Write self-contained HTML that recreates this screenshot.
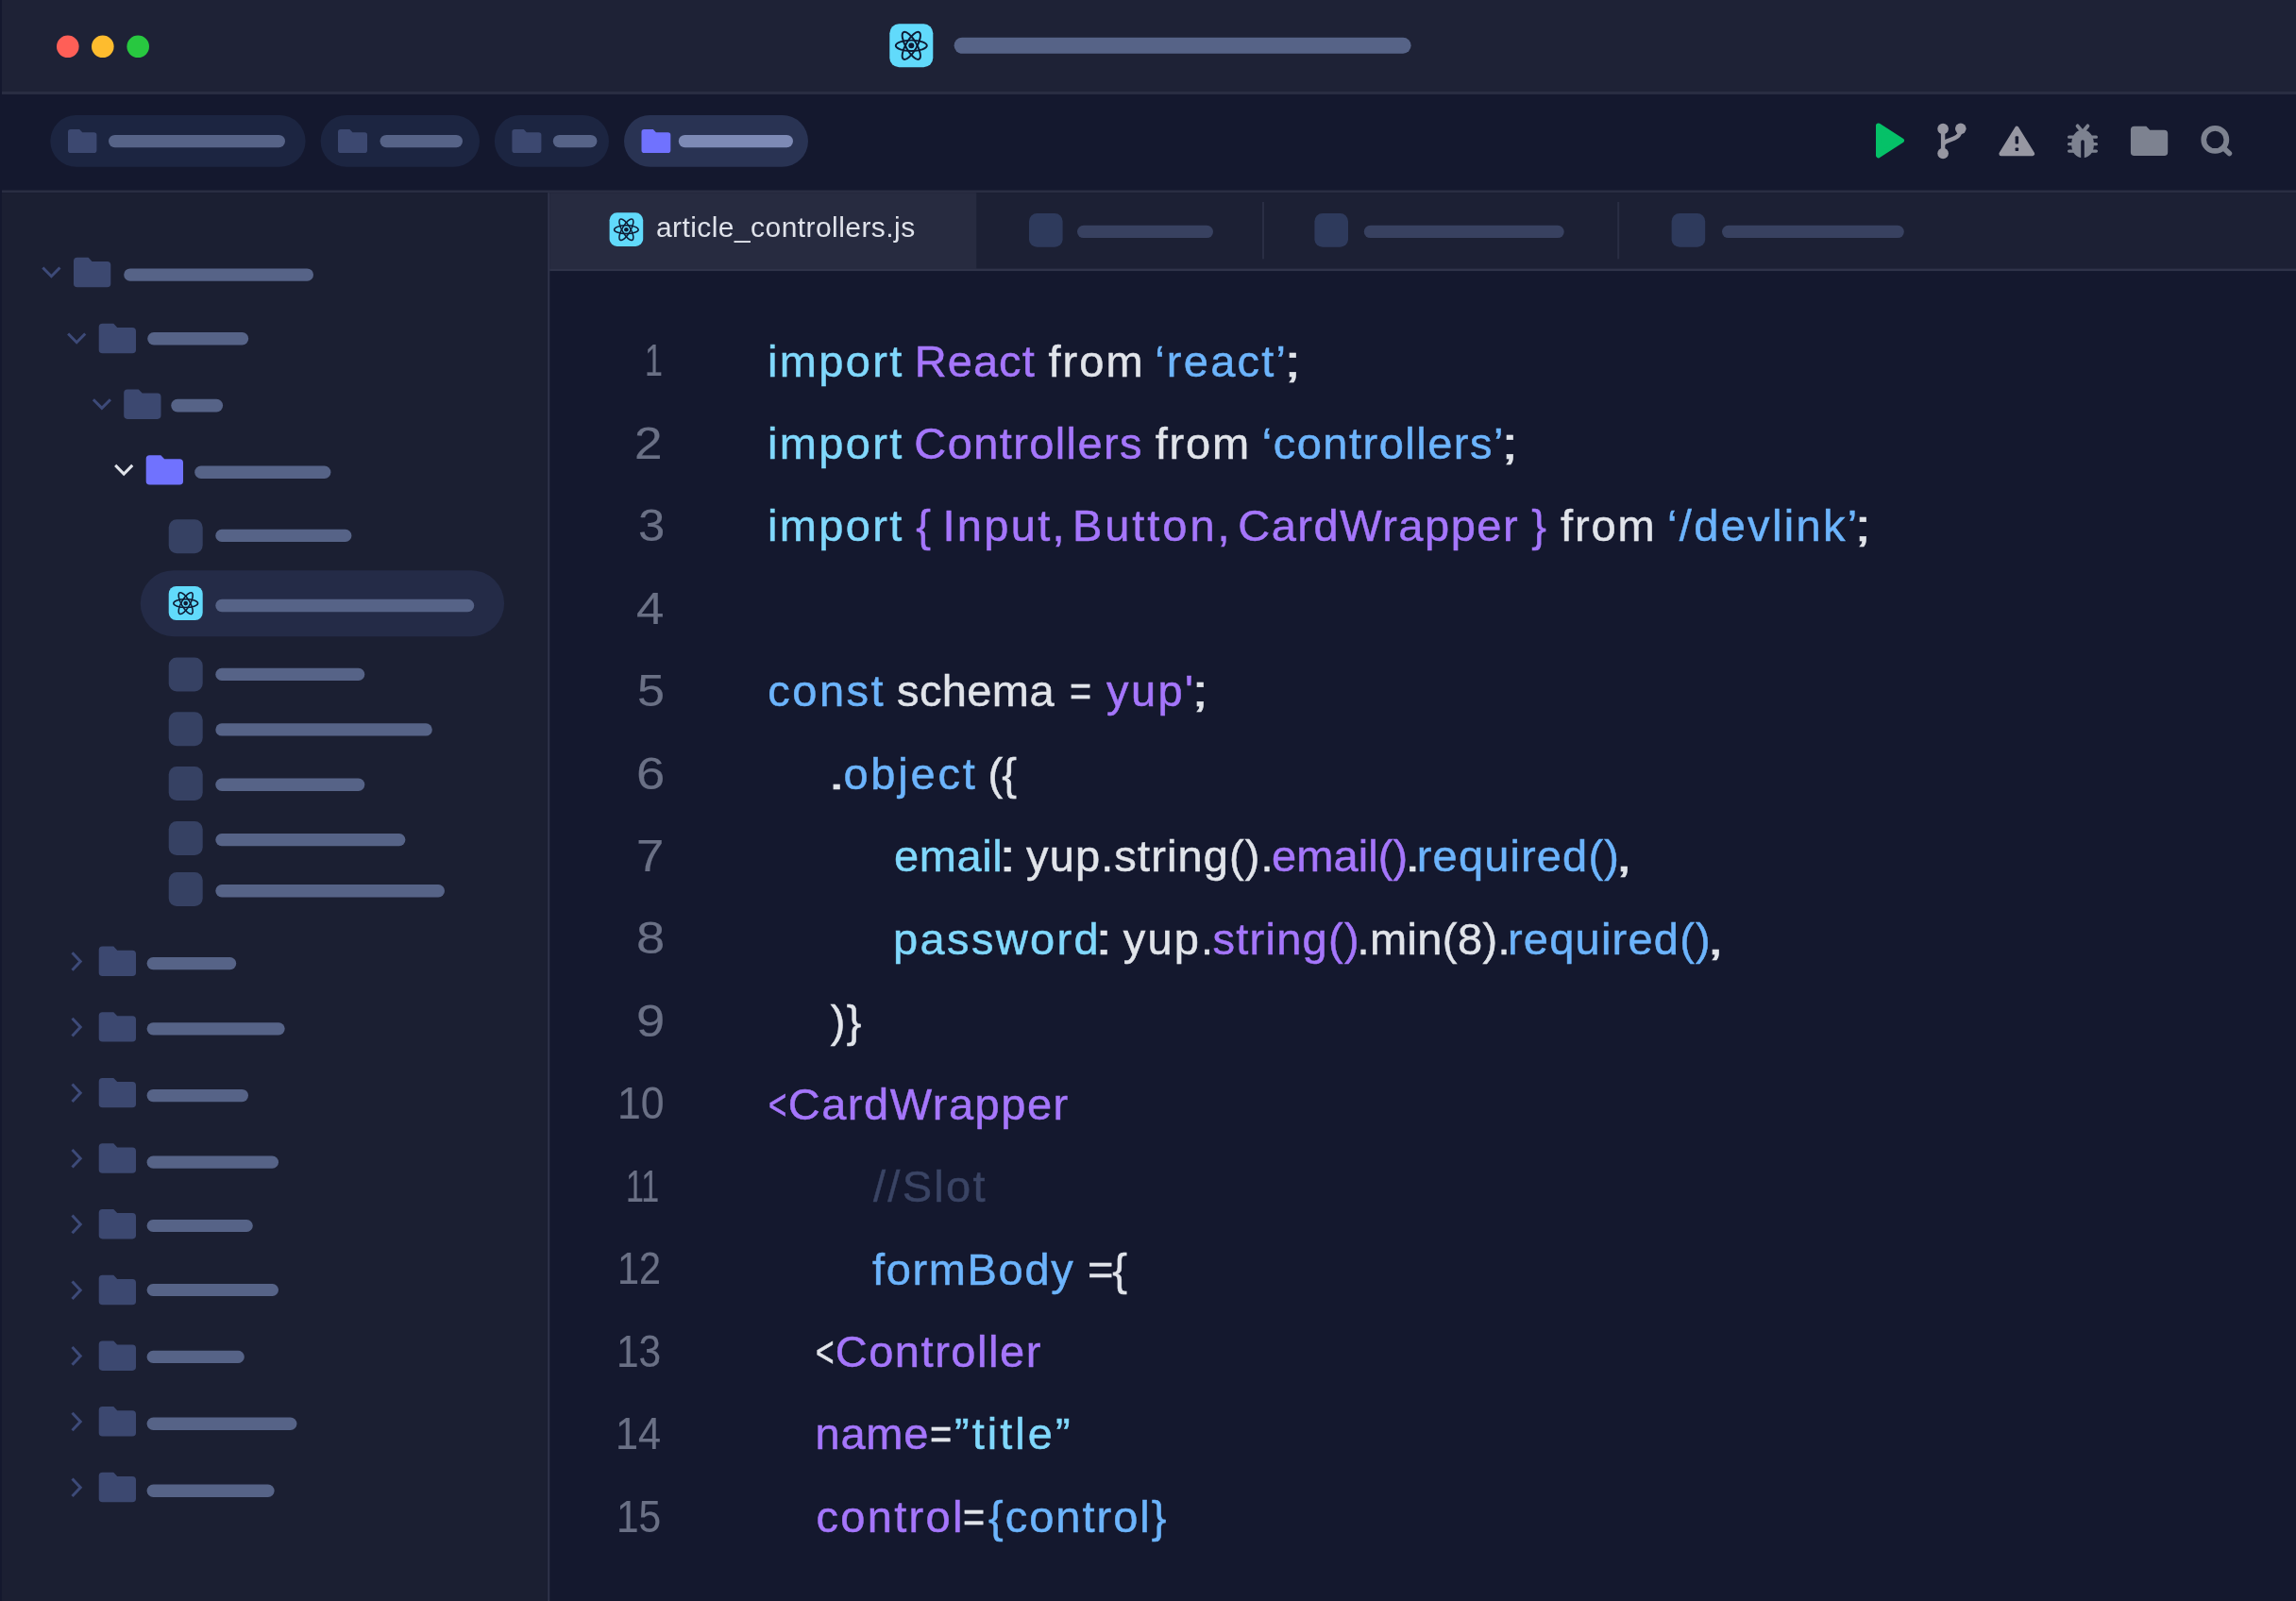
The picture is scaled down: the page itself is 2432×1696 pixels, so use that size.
<!DOCTYPE html>
<html lang="en">
<head>
<meta charset="utf-8">
<title>article_controllers.js</title>
<style>
html,body{margin:0;padding:0;background:#14182e;}
body{width:2432px;height:1696px;position:relative;overflow:hidden;font-family:"Liberation Sans",sans-serif;}
svg{position:absolute;left:0;top:0;display:block;}
#t{position:absolute;left:0;top:0;width:2432px;height:1696px;will-change:transform;}
#t span{position:absolute;white-space:pre;-webkit-text-stroke:0.5px;font-size:47.0px;line-height:47.0px;font-family:"Liberation Sans",sans-serif;}
</style>
</head>
<body>
<svg width="2432" height="1696" viewBox="0 0 2432 1696">
<rect x="2" y="0" width="2430" height="97" fill="#1e2236"/>
<rect x="2" y="97" width="2430" height="3" fill="#292d42"/>
<rect x="2" y="201.5" width="2430" height="2.7" fill="#292d42"/>
<rect x="2" y="204.2" width="578" height="1491.8" fill="#1b1f32"/>
<rect x="580.2" y="204.2" width="2" height="1491.8" fill="#30344a"/>
<rect x="582.2" y="204.2" width="1849.8" height="80.4" fill="#1c2034"/>
<rect x="582.2" y="204.2" width="452.1" height="80.4" fill="#272b40"/>
<rect x="582.2" y="284.5" width="1849.8" height="2.6" fill="#2f3349"/>
<circle cx="71.8" cy="49.3" r="11.8" fill="#ff5f57"/>
<circle cx="108.8" cy="49.3" r="11.8" fill="#febc2e"/>
<circle cx="146.2" cy="49.3" r="11.8" fill="#28c840"/>
<rect x="942.30" y="25.20" width="46.00" height="46.00" rx="10.00" fill="#61dafb"/><ellipse cx="965.30" cy="48.34" rx="16.50" ry="5.70" fill="none" stroke="#0e1a33" stroke-width="1.95" transform="rotate(0 965.30 48.34)"/><ellipse cx="965.30" cy="48.34" rx="16.50" ry="5.70" fill="none" stroke="#0e1a33" stroke-width="1.95" transform="rotate(60 965.30 48.34)"/><ellipse cx="965.30" cy="48.34" rx="16.50" ry="5.70" fill="none" stroke="#0e1a33" stroke-width="1.95" transform="rotate(120 965.30 48.34)"/><circle cx="965.30" cy="48.34" r="3.00" fill="#0e1a33"/>
<rect x="1010.6" y="39.8" width="484.0" height="16.9" rx="8.5" fill="#566387"/>
<rect x="53.3" y="122" width="270.3" height="54.8" rx="27.4" fill="#1c2541"/>
<path d="M74.80 137.00 H84.16 L87.25 140.25 H99.60 Q102.40 140.25 102.40 143.05 V159.20 Q102.40 162.00 99.60 162.00 H74.80 Q72.00 162.00 72.00 159.20 V139.80 Q72.00 137.00 74.80 137.00Z" fill="#3c4870"/>
<rect x="115.0" y="142.9" width="187.0" height="13.4" rx="6.7" fill="#566387"/>
<rect x="339.6" y="122" width="168.4" height="54.8" rx="27.4" fill="#1c2541"/>
<path d="M360.80 137.00 H370.40 L373.49 140.25 H386.20 Q389.00 140.25 389.00 143.05 V159.20 Q389.00 162.00 386.20 162.00 H360.80 Q358.00 162.00 358.00 159.20 V139.80 Q358.00 137.00 360.80 137.00Z" fill="#3c4870"/>
<rect x="402.5" y="142.9" width="87.5" height="13.4" rx="6.7" fill="#566387"/>
<rect x="523.8" y="122" width="121.2" height="54.8" rx="27.4" fill="#1c2541"/>
<path d="M545.20 137.00 H554.80 L557.89 140.25 H570.60 Q573.40 140.25 573.40 143.05 V159.20 Q573.40 162.00 570.60 162.00 H545.20 Q542.40 162.00 542.40 159.20 V139.80 Q542.40 137.00 545.20 137.00Z" fill="#3c4870"/>
<rect x="585.8" y="142.9" width="46.6" height="13.4" rx="6.7" fill="#566387"/>
<rect x="661.0" y="122" width="195.0" height="54.8" rx="27.4" fill="#293353"/>
<path d="M682.30 137.00 H691.82 L694.91 140.25 H707.50 Q710.30 140.25 710.30 143.05 V159.20 Q710.30 162.00 707.50 162.00 H682.30 Q679.50 162.00 679.50 159.20 V139.80 Q679.50 137.00 682.30 137.00Z" fill="#7072fe"/>
<rect x="718.8" y="142.9" width="121.2" height="13.4" rx="6.7" fill="#7d8ab5"/>
<path d="M1989.6 133.0 L2014.4 148.85 L1989.6 164.7 Z" fill="#05c168" stroke="#05c168" stroke-width="5.2" stroke-linejoin="round"/>
<g fill="#9797a2"><circle cx="2058.1" cy="136.5" r="5.8"/><circle cx="2076.8" cy="136.3" r="5.8"/><circle cx="2058.1" cy="162.5" r="5.8"/></g>
<path d="M2058.1 136.5 V162.5 M2058.1 154 C2058.1 146.5 2076.8 150.5 2076.8 136.5" fill="none" stroke="#9797a2" stroke-width="4.4"/>
<path d="M2136.3 135.8 L2153 163 H2119.6 Z" fill="#9797a2" stroke="#9797a2" stroke-width="4.4" stroke-linejoin="round"/>
<rect x="2134.6" y="144.2" width="3.5" height="8.4" rx="1" fill="#14182e"/><rect x="2134.6" y="156.6" width="3.5" height="3.3" rx="0.6" fill="#14182e"/>
<path d="M2201.5 138.6 Q2206 136.9 2210.5 138.6 C2215 141 2217.9 146 2217.9 153 C2217.9 162 2212.5 167.2 2206 167.2 C2199.5 167.2 2194.2 162 2194.2 153 C2194.2 146 2197 141 2201.5 138.6Z" fill="#7d8290"/>
<path d="M2200.6 133.4 L2204.4 138 M2211.4 133.4 L2207.6 138" stroke="#7d8290" stroke-width="3.9" stroke-linecap="round" fill="none"/>
<path d="M2191.6 145.2 H2197 M2191.6 152.7 H2197 M2191.6 160.1 H2197 M2215 145.2 H2220.4 M2215 152.7 H2220.4 M2215 160.1 H2220.4" stroke="#7d8290" stroke-width="3.3" stroke-linecap="round" fill="none"/>
<path d="M2204.2 168 V150 Q2204.2 148.2 2206 148.2 Q2207.8 148.2 2207.8 150 V168Z" fill="#14182e"/>
<path d="M2260.70 133.70 H2273.40 L2277.20 137.70 H2292.40 Q2296.20 137.70 2296.20 141.50 V161.30 Q2296.20 165.10 2292.40 165.10 H2260.70 Q2256.90 165.10 2256.90 161.30 V137.50 Q2256.90 133.70 2260.70 133.70Z" fill="#7d8290"/>
<circle cx="2346.3" cy="147.9" r="12.05" fill="none" stroke="#7d8290" stroke-width="5.7"/>
<path d="M2355.6 157 L2361.4 162.6" stroke="#7d8290" stroke-width="5.6" stroke-linecap="round"/>
<rect x="645.60" y="225.30" width="35.60" height="35.60" rx="8.00" fill="#61dafb"/><ellipse cx="663.40" cy="243.21" rx="12.77" ry="4.41" fill="none" stroke="#0e1a33" stroke-width="1.51" transform="rotate(0 663.40 243.21)"/><ellipse cx="663.40" cy="243.21" rx="12.77" ry="4.41" fill="none" stroke="#0e1a33" stroke-width="1.51" transform="rotate(60 663.40 243.21)"/><ellipse cx="663.40" cy="243.21" rx="12.77" ry="4.41" fill="none" stroke="#0e1a33" stroke-width="1.51" transform="rotate(120 663.40 243.21)"/><circle cx="663.40" cy="243.21" r="2.32" fill="#0e1a33"/>
<rect x="1090.0" y="226.0" width="35.6" height="35.8" rx="8.5" fill="#2e3a5c"/>
<rect x="1141.0" y="238.7" width="144.0" height="13.4" rx="6.7" fill="#384160"/>
<rect x="1392.4" y="226.0" width="35.6" height="35.8" rx="8.5" fill="#2e3a5c"/>
<rect x="1444.8" y="238.7" width="211.9" height="13.4" rx="6.7" fill="#384160"/>
<rect x="1770.6" y="226.0" width="35.6" height="35.8" rx="8.5" fill="#2e3a5c"/>
<rect x="1824.0" y="238.7" width="192.8" height="13.4" rx="6.7" fill="#384160"/>
<rect x="1337.0" y="214" width="2" height="60.4" fill="#2a2e44"/>
<rect x="1713.2" y="214" width="2" height="60.4" fill="#2a2e44"/>
<path d="M45.35 283.50 L54.40 292.70 L63.45 283.50" fill="none" stroke="#3d4a78" stroke-width="3.0" stroke-linecap="butt" stroke-linejoin="miter"/>
<path d="M81.80 272.80 H93.60 L97.49 276.90 H113.50 Q117.30 276.90 117.30 280.70 V300.40 Q117.30 304.20 113.50 304.20 H81.80 Q78.00 304.20 78.00 300.40 V276.60 Q78.00 272.80 81.80 272.80Z" fill="#3c4870"/>
<rect x="131.2" y="284.4" width="200.8" height="13.4" rx="6.7" fill="#566387"/>
<path d="M72.15 353.50 L81.20 362.70 L90.25 353.50" fill="none" stroke="#3d4a78" stroke-width="3.0" stroke-linecap="butt" stroke-linejoin="miter"/>
<path d="M108.50 342.80 H120.30 L124.19 346.90 H140.20 Q144.00 346.90 144.00 350.70 V370.40 Q144.00 374.20 140.20 374.20 H108.50 Q104.70 374.20 104.70 370.40 V346.60 Q104.70 342.80 108.50 342.80Z" fill="#3c4870"/>
<rect x="156.2" y="352.1" width="107.0" height="13.4" rx="6.7" fill="#566387"/>
<path d="M98.85 423.20 L107.90 432.40 L116.95 423.20" fill="none" stroke="#3d4a78" stroke-width="3.0" stroke-linecap="butt" stroke-linejoin="miter"/>
<path d="M135.00 412.50 H146.80 L150.69 416.60 H166.70 Q170.50 416.60 170.50 420.40 V440.10 Q170.50 443.90 166.70 443.90 H135.00 Q131.20 443.90 131.20 440.10 V416.30 Q131.20 412.50 135.00 412.50Z" fill="#3c4870"/>
<rect x="181.2" y="422.7" width="54.9" height="13.7" rx="6.8" fill="#566387"/>
<path d="M122.15 492.90 L131.20 502.10 L140.25 492.90" fill="none" stroke="#e1e4ea" stroke-width="3.0" stroke-linecap="butt" stroke-linejoin="miter"/>
<path d="M158.50 482.20 H170.30 L174.19 486.30 H190.20 Q194.00 486.30 194.00 490.10 V509.80 Q194.00 513.60 190.20 513.60 H158.50 Q154.70 513.60 154.70 509.80 V486.00 Q154.70 482.20 158.50 482.20Z" fill="#7072fe"/>
<rect x="206.2" y="493.6" width="144.2" height="13.4" rx="6.7" fill="#566387"/>
<rect x="148.7" y="604.2" width="385.4" height="70" rx="35" fill="#242b47"/>
<rect x="178.7" y="550.2" width="36" height="36" rx="8.5" fill="#364163"/>
<rect x="228.3" y="560.8" width="144.1" height="13.2" rx="6.6" fill="#566387"/>
<rect x="178.70" y="621.00" width="36.00" height="36.00" rx="8.00" fill="#61dafb"/><ellipse cx="196.70" cy="639.11" rx="12.91" ry="4.46" fill="none" stroke="#0e1a33" stroke-width="1.53" transform="rotate(0 196.70 639.11)"/><ellipse cx="196.70" cy="639.11" rx="12.91" ry="4.46" fill="none" stroke="#0e1a33" stroke-width="1.53" transform="rotate(60 196.70 639.11)"/><ellipse cx="196.70" cy="639.11" rx="12.91" ry="4.46" fill="none" stroke="#0e1a33" stroke-width="1.53" transform="rotate(120 196.70 639.11)"/><circle cx="196.70" cy="639.11" r="2.35" fill="#0e1a33"/>
<rect x="228.3" y="634.8" width="273.9" height="13.4" rx="6.7" fill="#566387"/>
<rect x="178.7" y="696.6" width="36" height="36" rx="8.5" fill="#364163"/>
<rect x="228.3" y="707.8" width="158.0" height="13.2" rx="6.6" fill="#566387"/>
<rect x="178.7" y="754.3" width="36" height="36" rx="8.5" fill="#364163"/>
<rect x="228.3" y="766.2" width="229.5" height="13.4" rx="6.7" fill="#566387"/>
<rect x="178.7" y="812.1" width="36" height="36" rx="8.5" fill="#364163"/>
<rect x="228.3" y="824.6" width="158.0" height="13.4" rx="6.7" fill="#566387"/>
<rect x="178.7" y="869.9" width="36" height="36" rx="8.5" fill="#364163"/>
<rect x="228.3" y="883.0" width="201.1" height="13.2" rx="6.6" fill="#566387"/>
<rect x="178.7" y="924.0" width="36" height="36" rx="8.5" fill="#364163"/>
<rect x="228.3" y="937.0" width="242.7" height="13.4" rx="6.7" fill="#566387"/>
<path d="M76.50 1009.20 L85.20 1018.50 L76.50 1027.80" fill="none" stroke="#3d4a78" stroke-width="3.0" stroke-linecap="butt" stroke-linejoin="miter"/>
<path d="M108.50 1002.60 H120.30 L124.19 1006.70 H140.20 Q144.00 1006.70 144.00 1010.50 V1030.20 Q144.00 1034.00 140.20 1034.00 H108.50 Q104.70 1034.00 104.70 1030.20 V1006.40 Q104.70 1002.60 108.50 1002.60Z" fill="#3c4870"/>
<rect x="155.6" y="1014.0" width="94.6" height="13.2" rx="6.6" fill="#566387"/>
<path d="M76.50 1078.80 L85.20 1088.10 L76.50 1097.40" fill="none" stroke="#3d4a78" stroke-width="3.0" stroke-linecap="butt" stroke-linejoin="miter"/>
<path d="M108.50 1072.20 H120.30 L124.19 1076.30 H140.20 Q144.00 1076.30 144.00 1080.10 V1099.80 Q144.00 1103.60 140.20 1103.60 H108.50 Q104.70 1103.60 104.70 1099.80 V1076.00 Q104.70 1072.20 108.50 1072.20Z" fill="#3c4870"/>
<rect x="155.6" y="1083.2" width="146.1" height="13.2" rx="6.6" fill="#566387"/>
<path d="M76.50 1148.50 L85.20 1157.80 L76.50 1167.10" fill="none" stroke="#3d4a78" stroke-width="3.0" stroke-linecap="butt" stroke-linejoin="miter"/>
<path d="M108.50 1141.90 H120.30 L124.19 1146.00 H140.20 Q144.00 1146.00 144.00 1149.80 V1169.50 Q144.00 1173.30 140.20 1173.30 H108.50 Q104.70 1173.30 104.70 1169.50 V1145.70 Q104.70 1141.90 108.50 1141.90Z" fill="#3c4870"/>
<rect x="155.6" y="1153.9" width="107.4" height="13.3" rx="6.6" fill="#566387"/>
<path d="M76.50 1217.90 L85.20 1227.20 L76.50 1236.50" fill="none" stroke="#3d4a78" stroke-width="3.0" stroke-linecap="butt" stroke-linejoin="miter"/>
<path d="M108.50 1211.30 H120.30 L124.19 1215.40 H140.20 Q144.00 1215.40 144.00 1219.20 V1238.90 Q144.00 1242.70 140.20 1242.70 H108.50 Q104.70 1242.70 104.70 1238.90 V1215.10 Q104.70 1211.30 108.50 1211.30Z" fill="#3c4870"/>
<rect x="155.6" y="1224.6" width="139.4" height="13.1" rx="6.6" fill="#566387"/>
<path d="M76.50 1287.60 L85.20 1296.90 L76.50 1306.20" fill="none" stroke="#3d4a78" stroke-width="3.0" stroke-linecap="butt" stroke-linejoin="miter"/>
<path d="M108.50 1281.00 H120.30 L124.19 1285.10 H140.20 Q144.00 1285.10 144.00 1288.90 V1308.60 Q144.00 1312.40 140.20 1312.40 H108.50 Q104.70 1312.40 104.70 1308.60 V1284.80 Q104.70 1281.00 108.50 1281.00Z" fill="#3c4870"/>
<rect x="155.6" y="1292.0" width="112.2" height="13.0" rx="6.5" fill="#566387"/>
<path d="M76.50 1357.40 L85.20 1366.70 L76.50 1376.00" fill="none" stroke="#3d4a78" stroke-width="3.0" stroke-linecap="butt" stroke-linejoin="miter"/>
<path d="M108.50 1350.80 H120.30 L124.19 1354.90 H140.20 Q144.00 1354.90 144.00 1358.70 V1378.40 Q144.00 1382.20 140.20 1382.20 H108.50 Q104.70 1382.20 104.70 1378.40 V1354.60 Q104.70 1350.80 108.50 1350.80Z" fill="#3c4870"/>
<rect x="155.6" y="1360.0" width="139.4" height="13.0" rx="6.5" fill="#566387"/>
<path d="M76.50 1427.10 L85.20 1436.40 L76.50 1445.70" fill="none" stroke="#3d4a78" stroke-width="3.0" stroke-linecap="butt" stroke-linejoin="miter"/>
<path d="M108.50 1420.50 H120.30 L124.19 1424.60 H140.20 Q144.00 1424.60 144.00 1428.40 V1448.10 Q144.00 1451.90 140.20 1451.90 H108.50 Q104.70 1451.90 104.70 1448.10 V1424.30 Q104.70 1420.50 108.50 1420.50Z" fill="#3c4870"/>
<rect x="155.6" y="1430.8" width="103.2" height="13.2" rx="6.6" fill="#566387"/>
<path d="M76.50 1496.70 L85.20 1506.00 L76.50 1515.30" fill="none" stroke="#3d4a78" stroke-width="3.0" stroke-linecap="butt" stroke-linejoin="miter"/>
<path d="M108.50 1490.10 H120.30 L124.19 1494.20 H140.20 Q144.00 1494.20 144.00 1498.00 V1517.70 Q144.00 1521.50 140.20 1521.50 H108.50 Q104.70 1521.50 104.70 1517.70 V1493.90 Q104.70 1490.10 108.50 1490.10Z" fill="#3c4870"/>
<rect x="155.6" y="1501.5" width="158.8" height="13.5" rx="6.8" fill="#566387"/>
<path d="M76.50 1566.40 L85.20 1575.70 L76.50 1585.00" fill="none" stroke="#3d4a78" stroke-width="3.0" stroke-linecap="butt" stroke-linejoin="miter"/>
<path d="M108.50 1559.80 H120.30 L124.19 1563.90 H140.20 Q144.00 1563.90 144.00 1567.70 V1587.40 Q144.00 1591.20 140.20 1591.20 H108.50 Q104.70 1591.20 104.70 1587.40 V1563.60 Q104.70 1559.80 108.50 1559.80Z" fill="#3c4870"/>
<rect x="155.6" y="1572.5" width="135.0" height="13.5" rx="6.8" fill="#566387"/>
</svg>
<div id="t">
<span style="left:813.00px;top:358.51px;color:#80d8fc;letter-spacing:2.355px;">import</span>
<span style="left:968.70px;top:358.51px;color:#a576fb;letter-spacing:1.070px;">React</span>
<span style="left:1110.40px;top:358.51px;color:#e1e4ea;letter-spacing:2.117px;">from</span>
<span style="left:1223.20px;top:358.51px;color:#6cb4fc;letter-spacing:2.245px;">‘react’</span>
<span style="left:1359.75px;top:358.51px;color:#e1e4ea;transform:scaleX(1.400);transform-origin:0 0;">;</span>
<span style="left:813.00px;top:445.97px;color:#80d8fc;letter-spacing:2.355px;">import</span>
<span style="left:968.30px;top:445.97px;color:#a576fb;letter-spacing:1.396px;">Controllers</span>
<span style="left:1223.70px;top:445.97px;color:#e1e4ea;letter-spacing:1.817px;">from</span>
<span style="left:1336.70px;top:445.97px;color:#6cb4fc;letter-spacing:1.505px;">‘controllers’</span>
<span style="left:1590.05px;top:445.97px;color:#e1e4ea;transform:scaleX(1.400);transform-origin:0 0;">;</span>
<span style="left:813.00px;top:533.43px;color:#80d8fc;letter-spacing:2.355px;">import</span>
<span style="left:970.15px;top:533.43px;color:#a576fb;">{</span>
<span style="left:998.40px;top:533.43px;color:#a576fb;letter-spacing:2.333px;">Input,</span>
<span style="left:1136.00px;top:533.43px;color:#a576fb;letter-spacing:2.936px;">Button,</span>
<span style="left:1311.20px;top:533.43px;color:#a576fb;letter-spacing:1.521px;">CardWrapper</span>
<span style="left:1622.30px;top:533.43px;color:#a576fb;">}</span>
<span style="left:1653.00px;top:533.43px;color:#e1e4ea;letter-spacing:1.884px;">from</span>
<span style="left:1766.00px;top:533.43px;color:#6cb4fc;letter-spacing:2.333px;">‘/devlink’</span>
<span style="left:1963.90px;top:533.43px;color:#e1e4ea;transform:scaleX(1.400);transform-origin:0 0;">;</span>
<span style="left:813.30px;top:708.35px;color:#6cb4fc;letter-spacing:2.480px;">const</span>
<span style="left:950.00px;top:708.35px;color:#e1e4ea;letter-spacing:0.394px;">schema</span>
<span style="left:1133.12px;top:708.35px;color:#e1e4ea;transform:scaleX(0.842);transform-origin:0 0;">=</span>
<span style="left:1172.00px;top:708.35px;color:#a576fb;letter-spacing:2.407px;">yup'</span>
<span style="left:1261.90px;top:708.35px;color:#e1e4ea;transform:scaleX(1.400);transform-origin:0 0;">;</span>
<span style="left:877.40px;top:795.81px;color:#e1e4ea;transform:scaleX(1.400);transform-origin:0 0;">.</span>
<span style="left:893.40px;top:795.81px;color:#6cb4fc;letter-spacing:2.788px;">object</span>
<span style="left:1046.40px;top:795.81px;color:#e1e4ea;letter-spacing:-0.851px;">({</span>
<span style="left:947.00px;top:883.27px;color:#80d8fc;letter-spacing:0.582px;">email</span>
<span style="left:1057.70px;top:883.27px;color:#e1e4ea;transform:scaleX(1.400);transform-origin:0 0;">:</span>
<span style="left:1087.00px;top:883.27px;color:#e1e4ea;letter-spacing:1.128px;">yup.string().</span>
<span style="left:1347.00px;top:883.27px;color:#a576fb;letter-spacing:0.089px;">email()</span>
<span style="left:1487.66px;top:883.27px;color:#e1e4ea;transform:scaleX(1.260);transform-origin:0 0;">.</span>
<span style="left:1500.80px;top:883.27px;color:#6cb4fc;letter-spacing:1.145px;">required()</span>
<span style="left:1710.60px;top:883.27px;color:#e1e4ea;transform:scaleX(1.400);transform-origin:0 0;">,</span>
<span style="left:946.00px;top:970.73px;color:#80d8fc;letter-spacing:2.370px;">password</span>
<span style="left:1160.40px;top:970.73px;color:#e1e4ea;transform:scaleX(1.400);transform-origin:0 0;">:</span>
<span style="left:1189.80px;top:970.73px;color:#e1e4ea;letter-spacing:2.141px;">yup.</span>
<span style="left:1284.40px;top:970.73px;color:#a576fb;letter-spacing:1.288px;">string()</span>
<span style="left:1437.50px;top:970.73px;color:#e1e4ea;letter-spacing:0.395px;">.min(8).</span>
<span style="left:1597.00px;top:970.73px;color:#6cb4fc;letter-spacing:1.212px;">required()</span>
<span style="left:1807.65px;top:970.73px;color:#e1e4ea;transform:scaleX(1.400);transform-origin:0 0;">,</span>
<span style="left:879.70px;top:1058.19px;color:#e1e4ea;letter-spacing:1.449px;">)}</span>
<span style="left:813.89px;top:1145.65px;color:#a576fb;transform:scaleX(0.704);transform-origin:0 0;">&lt;</span>
<span style="left:834.70px;top:1145.65px;color:#a576fb;letter-spacing:1.531px;">CardWrapper</span>
<span style="left:925.00px;top:1233.11px;color:#3a4464;letter-spacing:2.291px;">//Slot</span>
<span style="left:924.00px;top:1320.57px;color:#6cb4fc;letter-spacing:1.653px;">formBody</span>
<span style="left:1152.00px;top:1320.57px;color:#e1e4ea;letter-spacing:-1.147px;">={</span>
<span style="left:864.38px;top:1408.03px;color:#e1e4ea;transform:scaleX(0.713);transform-origin:0 0;">&lt;</span>
<span style="left:884.70px;top:1408.03px;color:#a576fb;letter-spacing:1.545px;">Controller</span>
<span style="left:863.50px;top:1495.49px;color:#a576fb;letter-spacing:0.757px;">name</span>
<span style="left:985.01px;top:1495.49px;color:#e1e4ea;transform:scaleX(0.846);transform-origin:0 0;">=</span>
<span style="left:1011.00px;top:1495.49px;color:#80d8fc;letter-spacing:3.035px;">”title”</span>
<span style="left:864.50px;top:1582.95px;color:#a576fb;letter-spacing:2.312px;">control</span>
<span style="left:1019.82px;top:1582.95px;color:#e1e4ea;transform:scaleX(0.842);transform-origin:0 0;">=</span>
<span style="left:1047.00px;top:1582.95px;color:#6cb4fc;letter-spacing:2.004px;">{control}</span>
<span style="left:682.50px;top:357.24px;color:#6a7085;font-size:48.5px;line-height:48.5px;-webkit-text-stroke:0.2px;transform:scaleX(0.700);transform-origin:0 0;">1</span>
<span style="left:671.61px;top:444.70px;color:#6a7085;font-size:48.5px;line-height:48.5px;-webkit-text-stroke:0.2px;transform:scaleX(1.096);transform-origin:0 0;">2</span>
<span style="left:675.55px;top:532.16px;color:#6a7085;font-size:48.5px;line-height:48.5px;-webkit-text-stroke:0.2px;transform:scaleX(1.046);transform-origin:0 0;">3</span>
<span style="left:673.71px;top:619.62px;color:#6a7085;font-size:48.5px;line-height:48.5px;-webkit-text-stroke:0.2px;transform:scaleX(1.088);transform-origin:0 0;">4</span>
<span style="left:674.82px;top:707.08px;color:#6a7085;font-size:48.5px;line-height:48.5px;-webkit-text-stroke:0.2px;transform:scaleX(1.075);transform-origin:0 0;">5</span>
<span style="left:673.66px;top:794.54px;color:#6a7085;font-size:48.5px;line-height:48.5px;-webkit-text-stroke:0.2px;transform:scaleX(1.122);transform-origin:0 0;">6</span>
<span style="left:673.83px;top:882.00px;color:#6a7085;font-size:48.5px;line-height:48.5px;-webkit-text-stroke:0.2px;transform:scaleX(1.087);transform-origin:0 0;">7</span>
<span style="left:673.66px;top:969.46px;color:#6a7085;font-size:48.5px;line-height:48.5px;-webkit-text-stroke:0.2px;transform:scaleX(1.122);transform-origin:0 0;">8</span>
<span style="left:673.66px;top:1056.92px;color:#6a7085;font-size:48.5px;line-height:48.5px;-webkit-text-stroke:0.2px;transform:scaleX(1.122);transform-origin:0 0;">9</span>
<span style="left:653.94px;top:1144.38px;color:#6a7085;font-size:48.5px;line-height:48.5px;-webkit-text-stroke:0.2px;transform:scaleX(0.920);transform-origin:0 0;">10</span>
<span style="left:662.87px;top:1231.84px;color:#6a7085;font-size:48.5px;line-height:48.5px;-webkit-text-stroke:0.2px;transform:scaleX(0.700);transform-origin:0 0;">11</span>
<span style="left:654.14px;top:1319.30px;color:#6a7085;font-size:48.5px;line-height:48.5px;-webkit-text-stroke:0.2px;transform:scaleX(0.854);transform-origin:0 0;">12</span>
<span style="left:653.08px;top:1406.76px;color:#6a7085;font-size:48.5px;line-height:48.5px;-webkit-text-stroke:0.2px;transform:scaleX(0.874);transform-origin:0 0;">13</span>
<span style="left:651.92px;top:1494.22px;color:#6a7085;font-size:48.5px;line-height:48.5px;-webkit-text-stroke:0.2px;transform:scaleX(0.892);transform-origin:0 0;">14</span>
<span style="left:653.08px;top:1581.68px;color:#6a7085;font-size:48.5px;line-height:48.5px;-webkit-text-stroke:0.2px;transform:scaleX(0.874);transform-origin:0 0;">15</span>
<span style="left:694.90px;top:226.30px;color:#dfe2ea;letter-spacing:0.438px;font-size:30.0px;line-height:30.0px;-webkit-text-stroke:0;">article_controllers.js</span>
</div>
</body>
</html>
